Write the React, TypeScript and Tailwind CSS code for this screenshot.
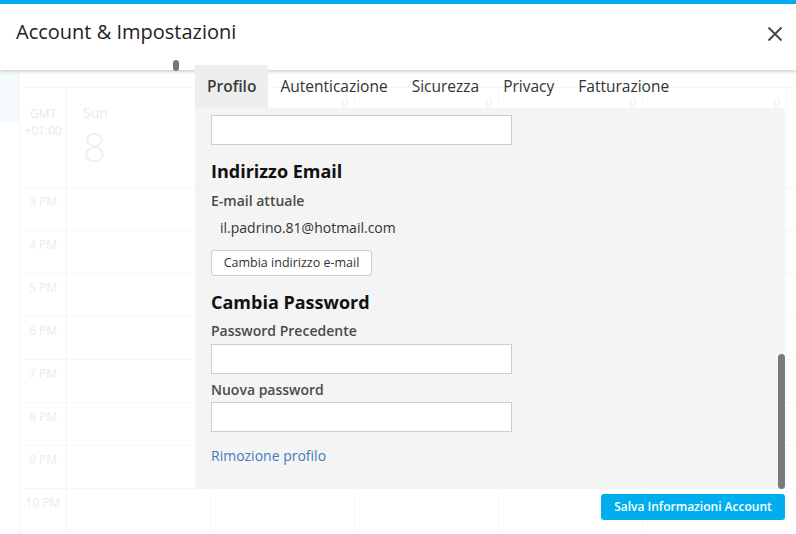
import React from 'react';

const days = ['Sun', 'Mon', 'Tue', 'Wed', 'Thu'];
const hours = ['3 PM', '4 PM', '5 PM', '6 PM', '7 PM', '8 PM', '9 PM', '10 PM'];
const tabs = ['Profilo', 'Autenticazione', 'Sicurezza', 'Privacy', 'Fatturazione'];

const CalendarBackdrop: React.FC = () => (
  <div className="flex h-full">
    <div className="w-[19px] shrink-0">
      <div className="mt-[73px] h-[49px] bg-[#f4f9fc]" />
    </div>
    <div className="mt-[73px] flex-1 border-l border-[#f5f5f5] pt-[14px]">
      <div className="flex h-[101px] border-y border-[#f5f5f5]">
        <div className="w-[47px] shrink-0 border-r border-[#f5f5f5] pt-[17px] text-center text-[12px] leading-[17px] text-[#e9e9e9]">
          <div>GMT</div>
          <div>+01:00</div>
        </div>
        {days.map((d, i) => (
          <div key={d} className="relative w-[144px] shrink-0 border-r border-[#f7f7f7] pl-[16px] pt-[15px]">
            {i === 0 && (
              <>
                <div className="text-[14px] leading-[20px] text-[#ebebeb]">{d}</div>
                <div className="pt-[2px] text-[40px] font-light leading-[44px] text-[#f0f0f0]">8</div>
              </>
            )}
            <span className="absolute right-[6px] top-[6px] text-[12px] text-[#eeeeee]">0</span>
          </div>
        ))}
      </div>
      {hours.map(h => (
        <div key={h} className="flex h-[43px] border-b border-[#f7f7f7]">
          <div className="w-[47px] shrink-0 border-r border-[#f5f5f5] pt-[5px] text-center text-[12px] leading-[18px] text-[#ebebeb]">
            {h}
          </div>
          {days.map(d => (
            <div key={d} className="w-[144px] shrink-0 border-r border-[#f8f8f8]" />
          ))}
        </div>
      ))}
    </div>
  </div>
);

const TextInput: React.FC<{ className?: string }> = ({ className = '' }) => (
  <input type="text" className={`block h-[30px] w-[301px] border border-[#cccccc] bg-white ${className}`} />
);

export default function App() {
  return (
    <div className="relative h-[534px] w-[796px] overflow-hidden bg-white font-['Open_Sans',sans-serif] text-[#333]">
      <CalendarBackdrop />

      <div className="absolute inset-0 flex flex-col">
        <div className="h-[4px] bg-[#00aeef]" />
        <header className="relative flex h-[66px] items-start justify-between bg-white pl-4 pr-[13px] shadow-[0_2px_3px_rgba(0,0,0,0.18)]">
          <h1 className="pt-[14px] text-[20px] leading-[28px] text-[#222]">Account &amp; Impostazioni</h1>
          <svg width="16" height="16" viewBox="0 0 16 16" className="mt-[22px] text-[#444]">
            <path d="M1.5 1.5 L14.5 14.5 M14.5 1.5 L1.5 14.5" stroke="currentColor" strokeWidth="1.8" fill="none" />
          </svg>
          <span className="absolute left-[173px] top-[56px] h-[11px] w-[6px] rounded-full bg-[#777]" />
        </header>

        <div className="relative z-10 -mt-[5px] ml-[195px] w-[590px]">
          <nav className="flex h-[43px] items-center text-[15.5px] leading-[43px] text-[#333]">
            {tabs.map((t, i) => (
              <div key={t} className={`px-3 ${i === 0 ? 'bg-[#eeeeee] font-semibold text-[#3a3a3a]' : ''}`}>{t}</div>
            ))}
          </nav>

          <div className="relative h-[381px] overflow-hidden bg-[#f4f4f4] pl-4">
            <TextInput className="mt-[7px]" />

            <h2 className="mt-[13px] text-[18px] font-bold leading-[26px] text-[#111]">Indirizzo Email</h2>
            <div className="mt-[7px] text-[14px] font-semibold leading-[20px] text-[#4a4a4a]">E-mail attuale</div>
            <div className="mt-[7px] pl-[9px] text-[14px] leading-[20px]">il.padrino.81@hotmail.com</div>
            <button className="mt-[12px] block h-[26px] w-[161px] rounded-[3px] border border-[#cccccc] bg-white text-[12.5px] text-[#333]">
              Cambia indirizzo e-mail
            </button>

            <h2 className="mt-[13px] text-[18px] font-bold leading-[26px] text-[#111]">Cambia Password</h2>
            <div className="mt-[6px] text-[14px] font-semibold leading-[20px] text-[#4a4a4a]">Password Precedente</div>
            <TextInput className="mt-[3px]" />
            <div className="mt-[6px] text-[14px] font-semibold leading-[20px] text-[#4a4a4a]">Nuova password</div>
            <TextInput className="mt-[2px]" />

            <div className="mt-[14px] text-[14px] leading-[20px] text-[#3e7cb9]">Rimozione profilo</div>

            <span className="absolute right-0 top-[246px] h-[135px] w-[7px] rounded-full bg-[#7a7a7a]" />
          </div>

          <div className="mt-[5px] flex justify-end">
            <button className="h-[26px] w-[184px] rounded-[3px] bg-[#00aeef] text-[12px] font-semibold text-white">
              Salva Informazioni Account
            </button>
          </div>
        </div>
      </div>
    </div>
  );
}
